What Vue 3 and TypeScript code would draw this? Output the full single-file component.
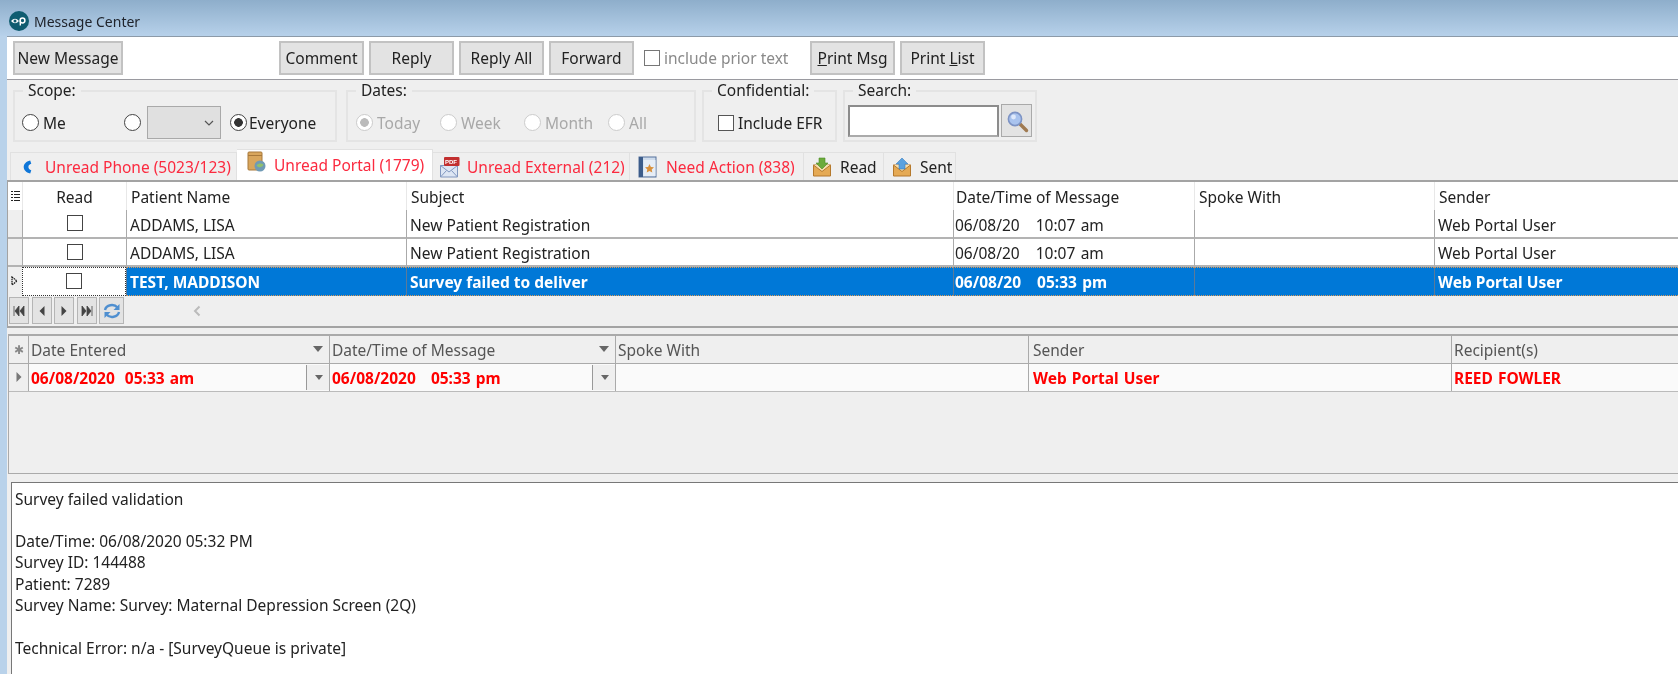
<script setup lang="ts">
interface Row { name: string; subject: string; date: string; spoke: string; sender: string; selected?: boolean }
const rows: Row[] = [
  { name: 'ADDAMS, LISA', subject: 'New Patient Registration', date: '06/08/20   10:07 am', spoke: '', sender: 'Web Portal User' },
  { name: 'ADDAMS, LISA', subject: 'New Patient Registration', date: '06/08/20   10:07 am', spoke: '', sender: 'Web Portal User' },
  { name: 'TEST, MADDISON', subject: 'Survey failed to deliver', date: '06/08/20   05:33 pm', spoke: '', sender: 'Web Portal User', selected: true },
]
const entered = '06/08/2020  05:33 am'
const messaged = '06/08/2020   05:33 pm'
const bodyLines: string[] = [
  'Survey failed validation', '',
  'Date/Time: 06/08/2020 05:32 PM',
  'Survey ID: 144488',
  'Patient: 7289',
  'Survey Name: Survey: Maternal Depression Screen (2Q)', '',
  'Technical Error: n/a - [SurveyQueue is private]',
]
</script>

<template>
  <div class="app">
    <header class="titlebar">
      <svg class="logo" viewBox="0 0 20 20" width="20" height="20">
        <circle cx="10" cy="10" r="10" fill="#0f5c70" />
        <path d="M2 10 Q6 5.5 10 10 Q6 14.500 2 10Z" fill="#fff" />
        <circle cx="6" cy="10" r="1.500" fill="#0f5c70" />
        <circle cx="13.500" cy="9.500" r="2.400" fill="none" stroke="#fff" stroke-width="1.500" />
        <path d="M11.300 9.500V14.500" stroke="#fff" stroke-width="1.400" />
      </svg>
      <span class="title">Message Center</span>
    </header>

    <main class="window">
      <section class="toolbar">
        <button class="btn btn-new">New Message</button>
        <div class="actions">
          <button class="btn">Comment</button>
          <button class="btn">Reply</button>
          <button class="btn">Reply All</button>
          <button class="btn">Forward</button>
        </div>
        <label class="prior"><span class="check check-dim"></span>include prior text</label>
        <div class="actions prints">
          <button class="btn"><u>P</u>rint Msg</button>
          <button class="btn">Print <u>L</u>ist</button>
        </div>
      </section>

      <section class="filters">
        <fieldset class="group scope">
          <legend>Scope:</legend>
          <span class="radio"></span><span class="opt opt-me">Me</span>
          <span class="radio"></span>
          <span class="combo">
            <svg viewBox="0 0 10 6" width="10" height="6"><path d="M1 1l4 4 4-4" fill="none" stroke="#555" stroke-width="1.200" /></svg>
          </span>
          <span class="radio radio-on"></span><span class="opt opt-tight">Everyone</span>
        </fieldset>
        <fieldset class="group dates">
          <legend>Dates:</legend>
          <span class="radio radio-dis radio-dis-on"></span><span class="opt dim">Today</span>
          <span class="radio radio-dis"></span><span class="opt dim">Week</span>
          <span class="radio radio-dis"></span><span class="opt dim">Month</span>
          <span class="radio radio-dis"></span><span class="opt dim">All</span>
        </fieldset>
        <fieldset class="group conf">
          <legend>Confidential:</legend>
          <span class="check"></span><span class="opt">Include EFR</span>
        </fieldset>
        <fieldset class="group search">
          <legend>Search:</legend>
          <span class="search-input"></span>
          <span class="search-btn">
            <svg viewBox="0 0 24 24" width="24" height="24">
              <path d="M15 15l6.500 6.500" stroke="#a07a50" stroke-width="3.400" stroke-linecap="round" />
              <circle cx="10" cy="10" r="6.600" fill="#a9c3ee" stroke="#7d93c4" stroke-width="1.600" />
              <circle cx="8.500" cy="8" r="2.400" fill="#dfe9fb" />
            </svg>
          </span>
        </fieldset>
      </section>

      <nav class="tabs">
        <div class="tab tab-phone">
          <svg viewBox="0 0 10 16" width="9" height="16"><path d="M8 .8C3 2 .8 5 .8 8s2.200 6 7.200 7.200l1.200-3.700C7.200 11 6 9.800 6 8s1.200-3 3.200-3.500z" fill="#0f76d8" /></svg>
          <span class="tab-label red">Unread Phone (5023/123)</span>
        </div>
        <div class="tab tab-active">
          <svg class="ico-active" viewBox="0 0 20 22" width="20" height="22">
            <rect x="1" y="1" width="14" height="18" rx="1" fill="#d9a65c" stroke="#a8783a" />
            <rect x="1" y="4" width="14" height="1" fill="#a8783a" />
            <circle cx="13" cy="15" r="5.500" fill="#6f9ab5" />
            <path d="M9.500 14.500c2-2.500 5-2.500 7-1-1 3-5 4-7 1z" fill="#8fc06d" />
          </svg>
          <span class="tab-label red">Unread Portal (1779)</span>
        </div>
        <div class="tab tab-ext">
          <svg viewBox="0 0 22 22" width="22" height="22">
            <path d="M1.500 9.500h17v11.500h-17z" fill="#dde6f4" stroke="#8298c0" />
            <path d="M1.500 9.500l8.500 6.500 8.500-6.500M1.500 21l6-6.500M18.500 21l-6-6.500" fill="none" stroke="#8298c0" />
            <rect x="5" y="1" width="15.500" height="9" rx="1" fill="#c22f2f" />
            <text x="6" y="8.300" class="pdf">PDF</text>
          </svg>
          <span class="tab-label red">Unread External (212)</span>
        </div>
        <div class="tab">
          <svg viewBox="0 0 20 22" width="20" height="22">
            <rect x="1" y="1" width="17" height="20" fill="#cfdcec" stroke="#54719b" />
            <rect x="1" y="1" width="4" height="20" fill="#3c5c8a" />
            <rect x="5.500" y="4" width="12" height="16" fill="#e6edf6" />
            <path d="M11.500 8l1.400 2.900 3.100.4-2.300 2.100.6 3.100-2.800-1.600-2.800 1.600.6-3.100-2.300-2.100 3.100-.4z" fill="#d9913c" />
          </svg>
          <span class="tab-label red">Need Action (838)</span>
        </div>
        <div class="tab">
          <svg viewBox="0 0 20 20" width="20" height="20">
            <path d="M1.500 8h17v11h-17z" fill="#e5aa55" stroke="#b5792c" />
            <path d="M1.500 8l8.500 6.500L18.500 8" fill="#f6dfb0" stroke="#b5792c" />
            <path d="M7 1h6v5h3l-6 6-6-6h3z" fill="#6cab3c" stroke="#4a8a24" stroke-width=".6" />
          </svg>
          <span class="tab-label">Read</span>
        </div>
        <div class="tab">
          <svg viewBox="0 0 20 20" width="20" height="20">
            <path d="M1.500 8h17v11h-17z" fill="#e5aa55" stroke="#b5792c" />
            <path d="M1.500 8l8.500 6.500L18.500 8" fill="#f6dfb0" stroke="#b5792c" />
            <path d="M10 1l6 6h-3v5H7V7H4z" fill="#5aa2e0" stroke="#3a7fc0" stroke-width=".6" />
          </svg>
          <span class="tab-label">Sent</span>
        </div>
      </nav>

      <section class="grid-main">
        <div class="g-row g-head">
          <div class="g-ind g-ind-head">
            <svg viewBox="0 0 9 10" width="9" height="10"><path d="M0 .5h2M3 .5h6M0 3.500h2M3 3.500h6M0 6.500h2M3 6.500h6M0 9.500h2M3 9.500h6" stroke="#222" /></svg>
          </div>
          <div class="g-cell center">Read</div>
          <div class="g-cell">Patient Name</div>
          <div class="g-cell">Subject</div>
          <div class="g-cell">Date/Time of Message</div>
          <div class="g-cell">Spoke With</div>
          <div class="g-cell">Sender</div>
        </div>
        <div v-for="(r, i) in rows" :key="i" class="g-row g-data" :class="{ selected: r.selected }">
          <div class="g-ind">
            <svg v-if="r.selected" viewBox="0 0 8 10" width="8" height="10"><path d="M1 1l5 4-5 4z" fill="none" stroke="#111" stroke-width="1.200" stroke-dasharray="1.500 .7" /></svg>
          </div>
          <div class="g-cell center read-cell"><span class="check check-row"></span></div>
          <div class="g-cell">{{ r.name }}</div>
          <div class="g-cell">{{ r.subject }}</div>
          <div class="g-cell pre">{{ r.date }}</div>
          <div class="g-cell">{{ r.spoke }}</div>
          <div class="g-cell">{{ r.sender }}</div>
        </div>
        <div class="pager">
          <button class="nav"><svg viewBox="0 0 12 10" width="12" height="10"><path d="M1 0v10M6 0v10L2 5zM11 0v10L7 5z" fill="#444" stroke="#444" stroke-width=".8" /></svg></button>
          <button class="nav"><svg viewBox="0 0 6 10" width="6" height="10"><path d="M5.500 0v10L.5 5z" fill="#444" /></svg></button>
          <button class="nav"><svg viewBox="0 0 6 10" width="6" height="10"><path d="M.5 0v10l5-5z" fill="#444" /></svg></button>
          <button class="nav"><svg viewBox="0 0 12 10" width="12" height="10"><path d="M11 0v10M6 0v10l4-5zM1 0v10l4-5z" fill="#444" stroke="#444" stroke-width=".8" /></svg></button>
          <button class="nav nav-refresh">
            <svg viewBox="0 0 20 18" width="20" height="18">
              <path d="M3 8a7 6 0 0 1 12.500-2.500" fill="none" stroke="#4f8fd0" stroke-width="2.400" />
              <path d="M17.500 2v6h-6z" fill="#4f8fd0" />
              <path d="M17 10a7 6 0 0 1-12.500 2.500" fill="none" stroke="#4f8fd0" stroke-width="2.400" />
              <path d="M2.500 16v-6h6z" fill="#4f8fd0" />
            </svg>
          </button>
          <svg class="pager-scroll" viewBox="0 0 8 12" width="8" height="12"><path d="M6.500 1.500L2 6l4.500 4.500" fill="none" stroke="#bbb" stroke-width="2" /></svg>
        </div>
      </section>

      <section class="grid-sub">
        <div class="s-row s-head">
          <div class="s-ind"><span class="star">✱</span></div>
          <div class="s-cell">Date Entered<i class="tri"></i></div>
          <div class="s-cell">Date/Time of Message<i class="tri"></i></div>
          <div class="s-cell">Spoke With</div>
          <div class="s-cell">Sender</div>
          <div class="s-cell">Recipient(s)</div>
        </div>
        <div class="s-row s-data">
          <div class="s-ind"><svg viewBox="0 0 6 10" width="6" height="10"><path d="M.5 0v10l5-5z" fill="#777" /></svg></div>
          <div class="s-cell">{{ entered }}<span class="dd"><i class="tri tri-sm"></i></span></div>
          <div class="s-cell">{{ messaged }}<span class="dd"><i class="tri tri-sm"></i></span></div>
          <div class="s-cell"></div>
          <div class="s-cell">Web Portal User</div>
          <div class="s-cell">REED FOWLER</div>
        </div>
      </section>

      <article class="body">
        <div v-for="(l, i) in bodyLines" :key="i" class="line">{{ l }}</div>
      </article>
    </main>
  </div>
</template>

<style scoped>
.app {
  width: 1678px; height: 674px; overflow: hidden;
  display: flex; flex-direction: column;
  background: #b9d2ea;
  font-family: "Noto Sans", "Open Sans", sans-serif;
  font-size: 15.500px; color: #222;
  filter: blur(0.35px);
}
.titlebar {
  height: 36px; flex: none; display: flex; align-items: center; gap: 5px; padding: 6px 0 0 9px;
  box-sizing: border-box;
  background: linear-gradient(#8eaecb, #b7d1ea);
}
.title { font-size: 14px; color: #20242c; }
.window { flex: 1; margin-left: 7px; background: #efefef; display: flex; flex-direction: column; border-top: 1px solid #8c9aa8; min-height: 0; }

.toolbar { height: 43px; flex: none; box-sizing: border-box; background: #fff; border-bottom: 1px solid #9a9aa0; display: flex; align-items: flex-start; padding: 4px 0 0 6px; }
.btn { height: 34px; width: 85px; padding: 0; box-sizing: border-box; background: #e3e3e3; border: 2px solid #c2c2c2; font: inherit; color: #222; white-space: nowrap; }
.btn-new { width: 110px; }
.actions { display: flex; gap: 5px; margin-left: 156px; }
.prior { display: flex; align-items: center; height: 34px; margin-left: 10px; color: #8a8a8a; gap: 4px; width: 166px; white-space: nowrap; }
.prints { margin-left: 0; }
.check { width: 14px; height: 14px; border: 1.500px solid #555; background: #fff; display: inline-block; flex: none; }
.check-dim { border-color: #777; }

.filters { height: 69px; flex: none; display: flex; align-items: flex-start; box-sizing: border-box; padding: 0 0 0 6px; gap: 6px; }
.group { margin: 2px 0 0; padding: 0; height: 60px; box-sizing: border-box; border: 2px solid #e4e4e4; display: flex; align-items: center; }
.group legend { padding: 0 5px; line-height: 17px; color: #222; }
.scope { width: 324px; padding: 6px 0 0 7px; }
.scope legend { margin-left: 1px; }
.dates { width: 350px; margin-left: 3px; padding: 6px 0 0 8px; }
.dates legend { margin-left: 0; }
.conf { width: 135px; padding: 6px 0 0 14px; }
.conf legend { margin-left: -6px; }
.search { width: 194px; padding: 2px 0 0 3px; }
.search legend { margin-left: 5px; }
.radio { width: 17px; height: 17px; box-sizing: border-box; border: 1.500px solid #444; border-radius: 50%; background: #fff; flex: none; display: inline-block; }
.radio-on { background: radial-gradient(circle, #333 0 4px, #fff 4.600px); }
.radio-dis { border-color: #ccc; }
.radio-dis-on { background: radial-gradient(circle, #bbb 0 4px, #fff 4.600px); }
.opt { margin-left: 4px; white-space: nowrap; }
.opt-me { width: 81px; }
.opt-tight { margin-left: 2px; }
.combo { width: 74px; height: 33px; box-sizing: border-box; margin: 0 9px 0 6px; background: #e0e0e0; border: 1px solid #a9a9a9; display: flex; align-items: center; justify-content: flex-end; padding-right: 6px; }
.dim { color: #a8a8a8; width: 63px; }
.search-input { width: 151px; height: 32px; box-sizing: border-box; background: #fff; border: 2px solid #8c8c8c; border-bottom-color: #aaa; }
.search-btn { width: 31px; height: 33px; box-sizing: border-box; margin-left: 2px; background: #e3e3e3; border: 1px solid #a9a9a9; display: flex; align-items: center; justify-content: center; }

.tabs { height: 31px; flex: none; display: grid; grid-template-columns: 227px 196px 197px 174px 80px 72px; margin-left: 3px; align-items: end; width: max-content; }
.tab { height: 28px; box-sizing: border-box; display: flex; align-items: center; padding-left: 8px; border: 1px solid #e1e1e1; border-bottom: 0; border-left-width: 0; gap: 8px; white-space: nowrap; }
.tab-phone { border-left-width: 1px; padding-left: 12px; gap: 13px; }
.tab-ext { padding-left: 6px; gap: 6px; }
.tab-active { height: 31px; background: #fff; padding: 0 0 0 10px; gap: 7px; }
.ico-active { margin-bottom: 6px; }
.tab-label { color: #222; }
.red { color: #fb2a3f; }
.pdf { font: bold 6px "Liberation Sans", sans-serif; fill: #fff; }

.grid-main { flex: none; border: 1px solid #a3a3a3; border-right: 0; border-top-width: 2px; border-bottom-width: 2px; background: #efefef; }
.g-row { display: grid; grid-template-columns: 14px 104px 280px 547px 241px 240px 1fr; }
.g-head { height: 28px; background: #fff; }
.g-data { height: 28.500px; background: #fff; }
.g-cell { box-sizing: border-box; border-left: 1.500px solid #aaa; display: flex; align-items: center; padding: 3px 0 0 3px; white-space: nowrap; overflow: hidden; color: #222; border-bottom: 2px solid #b3b3b3; }
.g-cell:nth-child(5) { padding-left: 1px; }
.g-head .g-cell { border-bottom: 0; border-left: 1.500px solid #e8e8e8; padding: 1px 0 0 4px; }
.g-head .g-cell:nth-child(5) { padding-left: 2px; }
.g-ind { background: #efefef; display: flex; align-items: center; justify-content: center; border-bottom: 2px solid #b3b3b3; box-sizing: border-box; }
.g-ind-head { background: #fff; border-bottom: 0; }
.g-row .center { justify-content: center; padding-left: 0; }
.g-data .read-cell { padding-top: 0; }
.pre { white-space: pre; word-spacing: 1.300px; }
.check-row { border-color: #444; }
.g-row.selected .g-cell { background: #0078d7; color: #fff; font-weight: 700; padding-top: 1px; border-top: 1px dotted #d99a5a; border-bottom: 1px dotted #d99a5a; border-left-color: #5a7a9a; }
.g-row.selected .read-cell { background: #fff; border: 1px dotted #333; padding-top: 0; }
.selected .g-ind { border-bottom: 0; }

.pager { height: 30px; display: flex; align-items: center; gap: 2.500px; padding-left: 1px; }
.nav { width: 20px; height: 27px; padding: 0; box-sizing: border-box; background: #e3e3e3; border: 1px solid #b5b5b5; display: flex; align-items: center; justify-content: center; }
.nav-refresh { width: 25px; }
.pager-scroll { margin-left: 66px; }

.grid-sub { margin: 6px 0 0 1px; height: 140px; flex: none; box-sizing: border-box; border: 2px solid #aaa; border-right: 0; border-bottom-width: 1px; border-left-width: 1px; background: #efefef; }
.s-row { display: grid; grid-template-columns: 19px 301px 286px 413px 423px 1fr; }
.s-head { height: 27px; border-bottom: 1.500px solid #aaa; }
.s-data { height: 27px; background: #fafafa; border-bottom: 1.500px solid #bbb; }
.s-ind { display: flex; align-items: center; justify-content: center; background: #efefef; }
.star { font-size: 12px; color: #888; }
.s-cell { position: relative; box-sizing: border-box; border-left: 1.500px solid #aaa; display: flex; align-items: center; padding: 2px 0 0 2px; color: #555; white-space: pre; overflow: hidden; }
.s-cell:nth-child(5) { padding-left: 4px; }
.s-data .s-cell { color: #f00; font-weight: 700; word-spacing: 1px; }
.tri { position: absolute; right: 6px; top: 10px; width: 0; height: 0; border: 5.500px solid transparent; border-top: 6px solid #666; border-bottom: 0; }
.dd { position: absolute; right: 0; top: 1px; bottom: 1px; width: 22px; background: #efefef; border-left: 1.500px solid #999; }
.tri-sm { right: 6px; top: 10px; border-width: 4px; border-top-width: 5px; border-bottom-width: 0; }

.body { margin: 8px 0 0 4px; flex: 1; background: #fff; border: 1px solid #777; border-right: 0; border-bottom: 0; padding: 6px 0 0 3px; }
.line { height: 21.300px; line-height: 21.300px; color: #222; white-space: pre; }
</style>
